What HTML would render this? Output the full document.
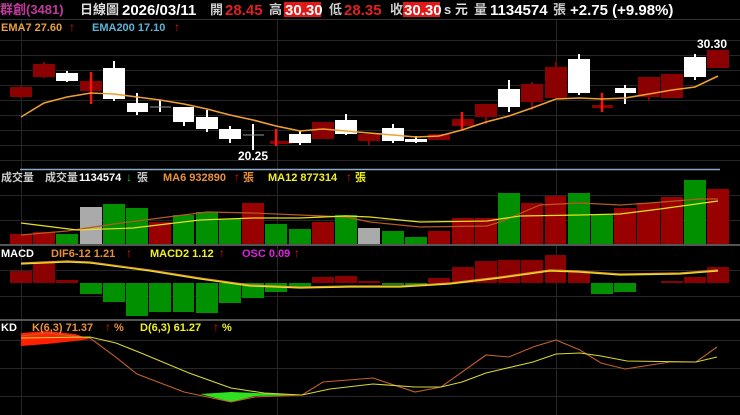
<!DOCTYPE html>
<html><head><meta charset="utf-8"><style>
html,body{margin:0;padding:0;background:#000;width:740px;height:415px;overflow:hidden}
svg{display:block}
text{font-family:"Liberation Sans","Noto Sans CJK TC",sans-serif;font-weight:bold}
</style></head><body>
<svg width="740" height="415" viewBox="0 0 740 415" xmlns="http://www.w3.org/2000/svg">
<rect width="740" height="415" fill="#000"/>
<g stroke="#262626" stroke-width="1">
<line x1="0" y1="40.5" x2="740" y2="40.5"/><line x1="0" y1="55.5" x2="740" y2="55.5"/><line x1="0" y1="70.5" x2="740" y2="70.5"/><line x1="0" y1="85.5" x2="740" y2="85.5"/><line x1="0" y1="100.5" x2="740" y2="100.5"/><line x1="0" y1="115.5" x2="740" y2="115.5"/><line x1="0" y1="130.5" x2="740" y2="130.5"/><line x1="0" y1="145.5" x2="740" y2="145.5"/><line x1="0" y1="160.5" x2="740" y2="160.5"/>
<line x1="0" y1="195.5" x2="740" y2="195.5"/><line x1="0" y1="220.5" x2="740" y2="220.5"/>
<line x1="0" y1="270.5" x2="740" y2="270.5"/><line x1="0" y1="296.5" x2="740" y2="296.5"/>
<line x1="0" y1="340.5" x2="740" y2="340.5"/><line x1="0" y1="368.5" x2="740" y2="368.5"/><line x1="0" y1="396.5" x2="740" y2="396.5"/>
<line x1="21.5" y1="19" x2="21.5" y2="415"/><line x1="277.5" y1="19" x2="277.5" y2="415"/><line x1="556.5" y1="19" x2="556.5" y2="415"/>
</g>
<line x1="0" y1="19.5" x2="740" y2="19.5" stroke="#333"/>
<line x1="20" y1="169.5" x2="720" y2="169.5" stroke="#8aa8c8" stroke-width="1.5"/>
<line x1="0" y1="245" x2="740" y2="245" stroke="#555" stroke-width="2"/>
<line x1="0" y1="320" x2="740" y2="320" stroke="#555" stroke-width="2"/>

<text x="0" y="14" font-size="13" fill="#c03a9c" font-weight="normal">群創(3481)</text>
<text x="80" y="14" font-size="13" fill="#ddd" font-weight="normal">日線圖</text>
<text x="122" y="15" font-size="15" fill="#fff">2026/03/11</text>
<text x="210" y="14" font-size="13" fill="#ccc" font-weight="normal">開</text>
<text x="225" y="15" font-size="15" fill="#e02020">28.45</text>
<text x="269" y="14" font-size="13" fill="#ccc" font-weight="normal">高</text>
<rect x="284" y="2" width="37" height="15" fill="#e01818"/>
<text x="285" y="15" font-size="15" fill="#fff">30.30</text>
<text x="329" y="14" font-size="13" fill="#ccc" font-weight="normal">低</text>
<text x="344" y="15" font-size="15" fill="#e02020">28.35</text>
<text x="390" y="14" font-size="13" fill="#ccc" font-weight="normal">收</text>
<rect x="403" y="2" width="37" height="15" fill="#e01818"/>
<text x="404" y="15" font-size="15" fill="#fff">30.30</text>
<text x="444" y="14" font-size="13" fill="#ddd">s 元</text>
<text x="474" y="14" font-size="13" fill="#ccc" font-weight="normal">量</text>
<text x="490" y="15" font-size="15" fill="#fff">1134574</text>
<text x="553" y="14" font-size="13" fill="#ccc" font-weight="normal">張</text>
<text x="570" y="15" font-size="15" fill="#fff">+2.75 (+9.98%)</text>

<text x="1" y="31" font-size="11" fill="#e8a040">EMA7 27.60</text>
<text x="69" y="31" font-size="12" fill="#f01010">↑</text>
<text x="92" y="31" font-size="11" fill="#5ab4d8">EMA200 17.10</text>
<text x="174" y="31" font-size="12" fill="#f01010">↑</text>

<g fill="#8b0000">
<rect x="10" y="87" width="22" height="10"/><rect x="33" y="64" width="22" height="13"/>
<rect x="80" y="81" width="22" height="10"/><rect x="270" y="141" width="22" height="3"/>
<rect x="312" y="122" width="22" height="17"/><rect x="358" y="134" width="22" height="7"/>
<rect x="428" y="134" width="22" height="6"/><rect x="452" y="119" width="22" height="7"/>
<rect x="475" y="104" width="22" height="13"/><rect x="521" y="84" width="22" height="18"/>
<rect x="545" y="67" width="22" height="31"/><rect x="592" y="105" width="21" height="3"/>
<rect x="638" y="77" width="22" height="20"/><rect x="661" y="74" width="22" height="24"/>
<rect x="707" y="50" width="22" height="18"/>
</g>
<g stroke="#8b0000" stroke-width="2">
<line x1="21" y1="86" x2="21" y2="98"/><line x1="44" y1="62" x2="44" y2="78"/>
<line x1="486" y1="117" x2="486" y2="124"/><line x1="532" y1="82" x2="532" y2="110"/><line x1="556" y1="62" x2="556" y2="98"/>
<line x1="649" y1="97" x2="649" y2="101"/><line x1="369" y1="141" x2="369" y2="145"/>
</g>
<g stroke="#ff1010" stroke-width="2.5">
<line x1="91" y1="72" x2="91" y2="104"/><line x1="276" y1="129" x2="276" y2="146"/>
<line x1="462" y1="112" x2="462" y2="130"/><line x1="602" y1="93" x2="602" y2="112"/>
</g>
<g fill="#fff">
<rect x="56" y="73" width="22" height="8"/><rect x="103" y="68" width="22" height="31"/>
<rect x="127" y="103" width="21" height="9"/><rect x="173" y="107" width="21" height="15"/>
<rect x="196" y="117" width="22" height="12"/><rect x="219" y="129" width="22" height="10"/>
<rect x="289" y="134" width="22" height="9"/><rect x="335" y="120" width="22" height="14"/>
<rect x="382" y="128" width="22" height="13"/><rect x="405" y="139" width="22" height="3"/>
<rect x="498" y="89" width="22" height="18"/><rect x="568" y="59" width="22" height="34"/>
<rect x="615" y="88" width="21" height="5"/><rect x="684" y="57" width="22" height="20"/>
</g>
<g stroke="#fff" stroke-width="2">
<line x1="67" y1="71" x2="67" y2="82"/><line x1="114" y1="61" x2="114" y2="101"/><line x1="137" y1="93" x2="137" y2="115"/>
<line x1="160" y1="100" x2="160" y2="112"/><line x1="184" y1="121" x2="184" y2="126"/><line x1="207" y1="110" x2="207" y2="132"/>
<line x1="230" y1="126" x2="230" y2="143"/><line x1="253" y1="124" x2="253" y2="150"/><line x1="300" y1="131" x2="300" y2="145"/>
<line x1="346" y1="114" x2="346" y2="135"/><line x1="393" y1="124" x2="393" y2="143"/><line x1="416" y1="136" x2="416" y2="143"/>
<line x1="509" y1="80" x2="509" y2="112"/><line x1="579" y1="54" x2="579" y2="95"/><line x1="625" y1="85" x2="625" y2="104"/>
<line x1="695" y1="54" x2="695" y2="80"/>
</g>
<g stroke="#999" stroke-width="1"><line x1="150" y1="107" x2="171" y2="107"/><line x1="243" y1="135" x2="264" y2="135"/></g>
<polyline fill="none" stroke="#f0a030" stroke-width="1.6" points="21,117 44,103 67,97 91,93 114,94 137,97 160,100 184,104 207,109 230,115 253,120 276,126 300,131 323,129 346,131 369,133 393,135 416,137 439,136 462,130 486,122 509,116 532,108 556,99 579,98 602,99 625,98 649,94 672,90 695,87 718,76"/>
<text x="238" y="160" font-size="12" fill="#fff">20.25</text>
<text x="697" y="48" font-size="12" fill="#fff">30.30</text>

<text x="1" y="181" font-size="11" fill="#ccc" font-weight="normal">成交量</text>
<text x="45" y="181" font-size="11" fill="#ccc" font-weight="normal">成交量</text>
<text x="79" y="181" font-size="11" fill="#fff">1134574</text>
<text x="126" y="181" font-size="12" fill="#20c020">↓</text>
<text x="137" y="181" font-size="11" fill="#ccc" font-weight="normal">張</text>
<text x="163" y="181" font-size="11" fill="#e8903a">MA6 932890</text>
<text x="234" y="181" font-size="12" fill="#f01010">↑</text>
<text x="243" y="181" font-size="11" fill="#e8903a" font-weight="normal">張</text>
<text x="268" y="181" font-size="11" fill="#f0f020">MA12 877314</text>
<text x="346" y="181" font-size="12" fill="#f01010">↑</text>
<text x="355" y="181" font-size="11" fill="#f0f020" font-weight="normal">張</text>
<g fill="#009000">
<rect x="56" y="234" width="22" height="10"/><rect x="103" y="204" width="22" height="40"/><rect x="126" y="208" width="22" height="36"/>
<rect x="173" y="215" width="21" height="29"/><rect x="196" y="212" width="22" height="32"/><rect x="219" y="219" width="22" height="25"/>
<rect x="265" y="224" width="22" height="20"/><rect x="289" y="229" width="22" height="15"/><rect x="335" y="215" width="22" height="29"/>
<rect x="382" y="231" width="22" height="13"/><rect x="405" y="237" width="22" height="7"/><rect x="498" y="193" width="22" height="51"/>
<rect x="568" y="193" width="22" height="51"/><rect x="591" y="215" width="22" height="29"/><rect x="684" y="180" width="22" height="64"/>
</g>
<g fill="#990000">
<rect x="10" y="234" width="22" height="10"/><rect x="33" y="232" width="22" height="12"/><rect x="149" y="222" width="22" height="22"/>
<rect x="242" y="203" width="22" height="41"/><rect x="312" y="222" width="22" height="22"/><rect x="428" y="231" width="22" height="13"/>
<rect x="452" y="218" width="22" height="26"/><rect x="475" y="218" width="22" height="26"/><rect x="521" y="203" width="22" height="41"/>
<rect x="545" y="196" width="21" height="48"/><rect x="614" y="208" width="22" height="36"/><rect x="637" y="203" width="23" height="41"/>
<rect x="661" y="197" width="22" height="47"/><rect x="707" y="189" width="22" height="55"/>
</g>
<g fill="#aaa"><rect x="80" y="207" width="22" height="37"/><rect x="358" y="228" width="22" height="16"/></g>
<polyline fill="none" stroke="#b85a20" stroke-width="1.2" points="21,235 67,231 114,224 160,218 207,212 253,213 300,215 346,217 370,222 420,227 487,226 500,222 540,205 580,203 620,205 650,203 700,199 718,199"/>
<polyline fill="none" stroke="#e8e020" stroke-width="1.2" points="21,223 77,230 133,228 200,220 253,218 300,218 346,216 370,217 420,222 487,221 520,216 580,215 620,214 660,209 718,201"/>

<text x="1" y="257" font-size="11" fill="#fff">MACD</text>
<text x="51" y="257" font-size="11" fill="#e8903a">DIF6-12 1.21</text>
<text x="126" y="257" font-size="12" fill="#f01010">↑</text>
<text x="150" y="257" font-size="11" fill="#f0f020">MACD2 1.12</text>
<text x="219" y="257" font-size="12" fill="#f01010">↑</text>
<text x="242" y="257" font-size="11" fill="#e020e0">OSC 0.09</text>
<text x="294" y="257" font-size="12" fill="#f01010">↑</text>
<g fill="#8b0000">
<rect x="10" y="271" width="22" height="12"/><rect x="33" y="263" width="22" height="20"/><rect x="56" y="280" width="22" height="3"/>
<rect x="312" y="277" width="22" height="6"/><rect x="335" y="276" width="22" height="7"/><rect x="358" y="281" width="22" height="2"/>
<rect x="428" y="278" width="22" height="5"/><rect x="452" y="267" width="22" height="16"/><rect x="475" y="261" width="22" height="22"/>
<rect x="498" y="260" width="22" height="23"/><rect x="521" y="260" width="22" height="23"/><rect x="545" y="255" width="21" height="28"/>
<rect x="568" y="272" width="22" height="11"/><rect x="661" y="281" width="22" height="2"/><rect x="684" y="277" width="22" height="6"/>
<rect x="707" y="267" width="22" height="16"/>
</g>
<g fill="#009000">
<rect x="80" y="283" width="22" height="11"/><rect x="103" y="283" width="22" height="19"/><rect x="126" y="283" width="22" height="33"/>
<rect x="149" y="283" width="22" height="29"/><rect x="173" y="283" width="21" height="29"/><rect x="196" y="283" width="22" height="30"/>
<rect x="219" y="283" width="22" height="20"/><rect x="242" y="283" width="22" height="15"/><rect x="265" y="283" width="22" height="9"/>
<rect x="289" y="283" width="22" height="4"/><rect x="382" y="283" width="22" height="2"/><rect x="405" y="283" width="22" height="2"/>
<rect x="591" y="283" width="22" height="11"/><rect x="614" y="283" width="22" height="9"/>
</g>
<polyline fill="none" stroke="#e8903a" stroke-width="1.2" points="21,263 67,261 90,262 150,270 200,278 250,285 300,287 350,286 400,286 450,283 500,277 550,270 578,271 620,274 680,273 718,270"/>
<polyline fill="none" stroke="#e8e020" stroke-width="1.2" points="21,264 67,262 90,263 150,271 200,279 250,286 300,288 350,287 400,287 450,284 500,278 550,271 578,272 620,275 680,274 718,271"/>

<polygon fill="#ff2000" points="21,333 47,331 75,334 90,339 75,341 47,344 21,346"/>
<polygon fill="#30e020" points="200,394 231,402 255,396 302,395 255,393 231,392"/>
<text x="1" y="331" font-size="11" fill="#fff">KD</text>
<text x="32" y="331" font-size="11" fill="#e8903a">K(6,3) 71.37</text>
<text x="105" y="331" font-size="12" fill="#f01010">↑</text>
<text x="114" y="331" font-size="11" fill="#e8903a">%</text>
<text x="140" y="331" font-size="11" fill="#f0f020">D(6,3) 61.27</text>
<text x="213" y="331" font-size="12" fill="#f01010">↑</text>
<text x="222" y="331" font-size="11" fill="#f0f020">%</text>
<polyline fill="none" stroke="#c0602a" stroke-width="1.1" points="21,336 47,333 90,338 113,355 137,374 184,392 231,402 255,397 302,395 323,382 373,378 415,392 441,387 486,355 509,357 533,347 556,340 580,350 601,363 625,369 670,362 696,362 717,347"/>
<polyline fill="none" stroke="#d8d830" stroke-width="1.1" points="21,338 90,337 116,343 141,353 189,373 231,388 264,393 302,395 330,389 373,384 415,387 441,387 462,382 486,373 533,362 556,354 580,353 601,356 627,361 696,362 717,357"/>
</svg>
</body></html>
